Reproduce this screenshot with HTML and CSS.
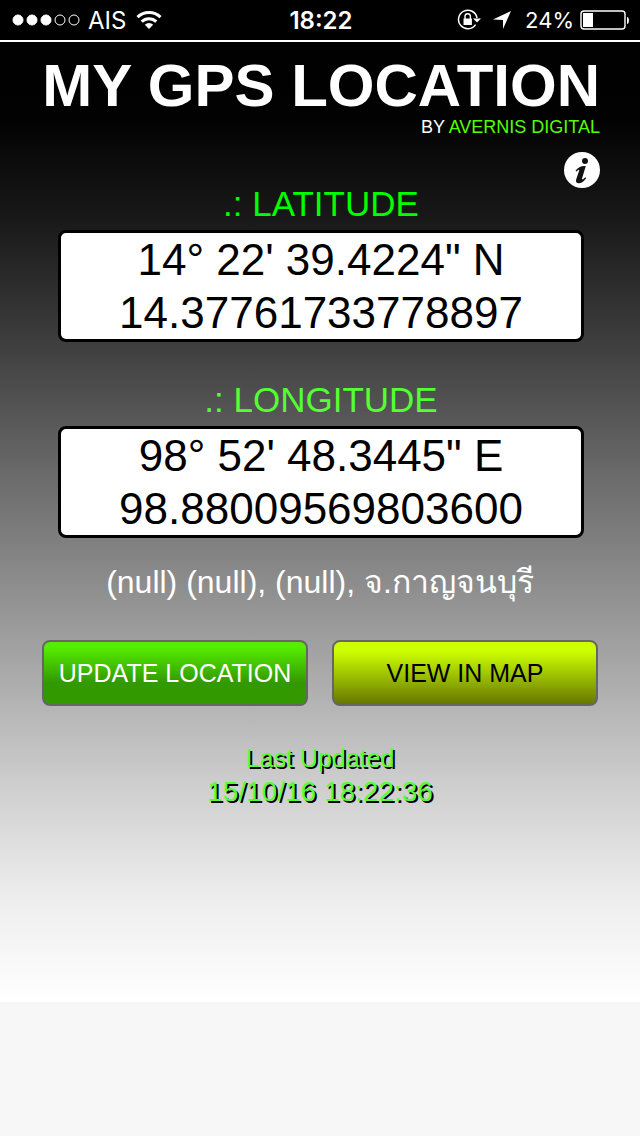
FILE: index.html
```html
<!DOCTYPE html>
<html lang="en">
<head>
    <meta charset="UTF-8">
    <meta name="viewport" content="width=device-width, initial-scale=1.0">
    <title>My GPS Location</title>
    <link rel="stylesheet" href="styles.css">
</head>
<body>
    <div class="status-bar">
        <div class="status-left">
            <svg width="68" height="12" viewBox="0 0 68 12" fill="#fff" stroke="#fff">
                <circle cx="6" cy="6" r="5"/>
                <circle cx="20" cy="6" r="5"/>
                <circle cx="34" cy="6" r="5"/>
                <circle cx="48" cy="6" r="5" fill="none"/>
                <circle cx="62" cy="6" r="5" fill="none"/>
            </svg>
            <span class="carrier">AIS</span>
            <svg class="wifi" width="26" height="20" viewBox="0 0 26 20" fill="none" stroke="#fff" stroke-width="3">
                <path d="M1.5 7.2a16.5 16.5 0 0 1 23 0"/>
                <path d="M5.7 11.6a10.5 10.5 0 0 1 14.6 0"/>
                <path d="M13 19l-4.2-4.3a6.2 6.2 0 0 1 8.4 0z" fill="#fff" stroke="none"/>
            </svg>
        </div>
        <span class="clock">18:22</span>
        <div class="status-right">
            <svg width="24" height="22" viewBox="0 0 24 22" fill="none" stroke="#fff">
                <path d="M18.6 15.6A9.3 9.3 0 1 1 20 9" stroke-width="1.5"/>
                <path d="M16 9.5h8l-4 4z" fill="#fff" stroke="none"/>
                <path d="M8 10V7.5a2.7 2.7 0 0 1 5.4 0V10" stroke-width="1.4"/>
                <rect x="6.5" y="9.5" width="8.4" height="6.5" fill="#fff" stroke="none"/>
            </svg>
            <svg class="arrow" width="18" height="18" viewBox="0 0 18 18" fill="#fff">
                <path d="M18 0L10 18V9L0 8.5z"/>
            </svg>
            <span class="percent">24%</span>
            <svg width="50" height="20" viewBox="0 0 50 20" fill="none" stroke="#fff">
                <rect x="1" y="1" width="44" height="18" rx="3" stroke-width="1.4"/>
                <rect x="3" y="3" width="10" height="14" fill="#fff" stroke="none"/>
                <path d="M47 7c2.6 0 2.6 7 0 7z" fill="#fff" stroke="none"/>
            </svg>
        </div>
    </div>

    <main class="app">
        <header class="header">
            <h1>MY GPS LOCATION</h1>
            <p class="byline">BY <span>AVERNIS DIGITAL</span></p>
            <button class="info" aria-label="Info">
                <svg width="36" height="36" viewBox="0 0 36 36">
                    <circle cx="18" cy="18" r="18" fill="#fff"/>
                    <circle cx="21" cy="9" r="3" fill="#111"/>
                    <path d="M11.5 18.7C14 15 17.5 13.6 21.8 14L18 26.6C17.7 28 18.8 27.6 21.3 25.2L22.2 26.2C19.5 30 16.8 31.3 14.3 31.2C12 31 11.6 29.3 12.3 27L15.2 18.6C15.5 17.2 14.4 17.6 12.6 19.6Z" fill="#111"/>
                </svg>
            </button>
        </header>

        <section class="coord">
            <h2>.: LATITUDE</h2>
            <div class="reading">
                <div>14° 22' 39.4224" N</div>
                <div>14.37761733778897</div>
            </div>
        </section>

        <section class="coord longitude">
            <h2>.: LONGITUDE</h2>
            <div class="reading">
                <div>98° 52' 48.3445" E</div>
                <div>98.88009569803600</div>
            </div>
        </section>

        <p class="address">(null) (null), (null), <span lang="th">จ.กาญจนบุรี</span></p>

        <div class="actions">
            <button class="btn update">UPDATE LOCATION</button>
            <button class="btn map">VIEW IN MAP</button>
        </div>

        <div class="updated">
            <div>Last Updated</div>
            <div class="date">15/10/16 18:22:36</div>
        </div>
    </main>
</body>
</html>
```
FILE: styles.css
```css
* {
    box-sizing: border-box;
}
body {
    margin: 0;
    background: #f7f7f7;
    font-family: "Liberation Sans", Arial, sans-serif;
}
h1, h2, p {
    margin: 0;
    font-weight: normal;
}
svg {
    display: block;
}
button {
    font-family: inherit;
    cursor: pointer;
}

/* status bar */
.status-bar {
    display: grid;
    grid-template-columns: 1fr auto 1fr;
    align-items: center;
    height: 42px;
    padding: 0 10px 0 12px;
    background: #000;
    border-bottom: 2px solid #fff;
    color: #fff;
    font-family: Inter, Roboto, sans-serif;
    font-size: 24px;
}
.status-left, .status-right {
    display: flex;
    align-items: center;
}
.status-right {
    justify-content: flex-end;
}
.carrier {
    margin: 0 10px 0 8px;
}
.clock {
    font-weight: 600;
}
.arrow {
    margin: 0 14px 0 12px;
}
.percent {
    margin-right: 6px;
    font-size: 22px;
}

/* app */
.app {
    padding: 15px 40px 194px;
    background: linear-gradient(#000 0%, #020202 8%, #1a1a1a 19%, #404040 32%, #6a6a6a 45%, #a4a4a4 64%, #cdcdcd 77%, #ededed 89%, #fff 100%);
    text-align: center;
}
.header {
    display: flex;
    flex-direction: column;
    align-items: flex-end;
}
h1 {
    color: #fff;
    font-size: 60px;
    font-weight: bold;
    line-height: 58px;
    white-space: nowrap;
}
.byline {
    color: #fff;
    font-size: 18px;
    line-height: 24px;
}
.byline span {
    color: #5f0;
}
.info {
    margin-top: 13px;
    padding: 0;
    border: none;
    background: none;
}
.coord {
    padding: 0 16px 0 18px;
}
.coord h2 {
    margin-bottom: 10px;
    color: #0f0;
    font-size: 35px;
    line-height: 32px;
}
.longitude {
    margin-top: 42px;
}
.longitude h2 {
    color: #5f3;
}
.reading {
    border: 3px solid #000;
    border-radius: 8px;
    background: #fff;
    color: #000;
    font-size: 44px;
    line-height: 53px;
}
.address {
    margin-top: 24px;
    color: #fff;
    font-size: 32px;
    line-height: 40px;
}
.actions {
    display: flex;
    gap: 24px;
    margin-top: 38px;
    padding: 0 2px;
}
.btn {
    flex: 1;
    height: 66px;
    padding: 0;
    border: 2px solid #666;
    border-radius: 8px;
    font-size: 25px;
    white-space: nowrap;
}
.update {
    background: linear-gradient(#5e0 0%, #5e0 8%, #390 65%, #390 100%);
    color: #fff;
}
.map {
    background: linear-gradient(#cf0 0%, #cf0 15%, #670 100%);
    color: #000;
}
.updated {
    margin-top: 36px;
    color: #5f3;
    font-size: 25px;
    line-height: 33px;
    text-shadow: 2px 2px 0 #000;
}
.date {
    font-size: 28px;
}
```
